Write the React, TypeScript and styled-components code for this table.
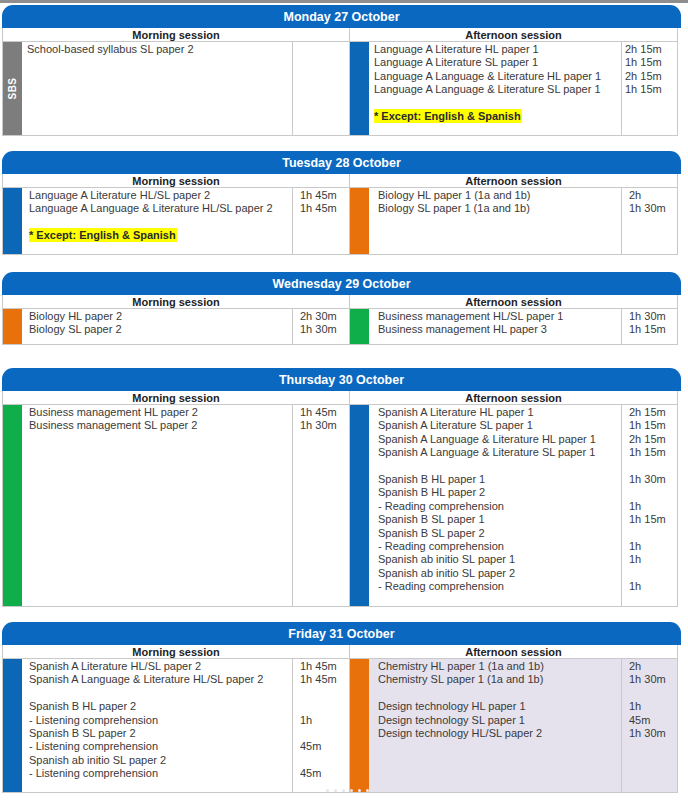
import React from "react";
import styled, { createGlobalStyle } from "styled-components";

const GlobalStyle = createGlobalStyle`
  html, body { margin: 0; padding: 0; background: #ffffff; }
  * { box-sizing: border-box; }
`;

type BarColor = "blue" | "orange" | "green" | "gray";
type Line = { t?: string; d?: string; hl?: boolean };
type Cell = { bar: BarColor; label?: string; lines: Line[]; tint?: boolean };
type DayData = { title: string; gap: number; h: number; compact?: boolean; am: Cell; pm: Cell };

const BAR: Record<BarColor, string> = {
  blue: "#0d67b7",
  orange: "#e8710c",
  green: "#10ad4b",
  gray: "#7d7d7d",
};

const BORDER = "#c9c9c9";

const Page = styled.div`
  position: relative;
  width: 688px;
  height: 800px;
  overflow: hidden;
  font-family: "Liberation Sans", Arial, sans-serif;
`;

const TopRule = styled.div`
  height: 3px;
  background: #8e8e8e;
  margin-bottom: 2px;
`;

const DayBlock = styled.section<{ $gap: number }>`
  margin: ${(p) => p.$gap}px 0 0 2px;
  width: 679px;
`;

const DayHeader = styled.div`
  height: 23px;
  padding-top: 1px;
  background: #0a68c1;
  border-radius: 11px 11px 0 0;
  color: #ffffff;
  font-weight: 700;
  font-size: 12.5px;
  display: flex;
  align-items: center;
  justify-content: center;
`;

const Table = styled.div<{ $h: number }>`
  width: 676px;
  display: grid;
  grid-template-columns: 19px 271px 57px 19px 253px 55px;
  grid-template-rows: 14px ${(p) => p.$h}px;
  border: 1px solid ${BORDER};
  border-top: none;
  background: #ffffff;
`;

const SessionHead = styled.div<{ $divider?: boolean }>`
  grid-column: span 3;
  height: 14px;
  padding-top: 1px;
  line-height: 13px;
  font-size: 11px;
  font-weight: 700;
  text-align: center;
  color: #232323;
  border-bottom: 1px solid ${BORDER};
  border-right: ${(p) => (p.$divider ? `1px solid ${BORDER}` : "none")};
`;

const Bar = styled.div<{ $color: BarColor }>`
  background: ${(p) => BAR[p.$color]};
  display: flex;
  align-items: center;
  justify-content: center;
`;

const BarLabel = styled.span`
  color: #ffffff;
  font-weight: 700;
  font-size: 10px;
  letter-spacing: 0.5px;
  transform: rotate(-90deg);
  white-space: nowrap;
`;

const SubjectCell = styled.div<{ $pad: number; $tint?: boolean }>`
  padding: 1px 0 0 ${(p) => p.$pad}px;
  border-right: 1px solid ${BORDER};
  background: ${(p) => (p.$tint ? "#e5e2ee" : "#ffffff")};
  font-size: 11px;
  line-height: 13.4px;
  color: #3a3a3a;
`;

const TimeCell = styled.div<{ $pad: number; $tint?: boolean; $divider?: boolean }>`
  padding: 1px 0 0 ${(p) => p.$pad}px;
  border-right: ${(p) => (p.$divider ? `1px solid ${BORDER}` : "none")};
  background: ${(p) => (p.$tint ? "#e5e2ee" : "#ffffff")};
  font-size: 11px;
  line-height: 13.4px;
  color: #3a3a3a;
`;

const Row = styled.div`
  height: 13.4px;
  white-space: nowrap;
`;

const Highlight = styled.span`
  background: #ffff00;
  font-weight: 700;
  color: #2a2a2a;
  padding: 1px 1px 1px 0;
`;

const Dots = styled.div`
  position: absolute;
  left: 326px;
  top: 789px;
  display: flex;
  gap: 5px;
`;

const Dot = styled.span<{ $strong?: boolean }>`
  width: 3px;
  height: 3px;
  border-radius: 50%;
  background: ${(p) => (p.$strong ? "rgba(240,240,245,0.95)" : "rgba(215,215,222,0.6)")};
`;

const days: DayData[] = [
  {
    title: "Monday 27 October",
    gap: 0,
    h: 93,
    compact: true,
    am: { bar: "gray", label: "SBS", lines: [{ t: "School-based syllabus SL paper 2" }] },
    pm: {
      bar: "blue",
      lines: [
        { t: "Language A Literature HL paper 1", d: "2h 15m" },
        { t: "Language A Literature SL paper 1", d: "1h 15m" },
        { t: "Language A Language & Literature HL paper 1", d: "2h 15m" },
        { t: "Language A Language & Literature SL paper 1", d: "1h 15m" },
        {},
        { t: "* Except: English & Spanish", hl: true },
      ],
    },
  },
  {
    title: "Tuesday 28 October",
    gap: 15,
    h: 66,
    am: {
      bar: "blue",
      lines: [
        { t: "Language A Literature HL/SL paper 2", d: "1h 45m" },
        { t: "Language A Language & Literature HL/SL paper 2", d: "1h 45m" },
        {},
        { t: "* Except: English & Spanish", hl: true },
      ],
    },
    pm: {
      bar: "orange",
      lines: [
        { t: "Biology HL paper 1 (1a and 1b)", d: "2h" },
        { t: "Biology SL paper 1 (1a and 1b)", d: "1h 30m" },
      ],
    },
  },
  {
    title: "Wednesday 29 October",
    gap: 17,
    h: 35,
    am: {
      bar: "orange",
      lines: [
        { t: "Biology HL paper 2", d: "2h 30m" },
        { t: "Biology SL paper 2", d: "1h 30m" },
      ],
    },
    pm: {
      bar: "green",
      lines: [
        { t: "Business management HL/SL paper 1", d: "1h 30m" },
        { t: "Business management HL paper 3", d: "1h 15m" },
      ],
    },
  },
  {
    title: "Thursday 30 October",
    gap: 23,
    h: 201,
    am: {
      bar: "green",
      lines: [
        { t: "Business management HL paper 2", d: "1h 45m" },
        { t: "Business management SL paper 2", d: "1h 30m" },
      ],
    },
    pm: {
      bar: "blue",
      lines: [
        { t: "Spanish A Literature HL paper 1", d: "2h 15m" },
        { t: "Spanish A Literature SL paper 1", d: "1h 15m" },
        { t: "Spanish A Language & Literature HL paper 1", d: "2h 15m" },
        { t: "Spanish A Language & Literature SL paper 1", d: "1h 15m" },
        {},
        { t: "Spanish B HL paper 1", d: "1h 30m" },
        { t: "Spanish B HL paper 2" },
        { t: "- Reading comprehension", d: "1h" },
        { t: "Spanish B SL paper 1", d: "1h 15m" },
        { t: "Spanish B SL paper 2" },
        { t: "- Reading comprehension", d: "1h" },
        { t: "Spanish ab initio SL paper 1", d: "1h" },
        { t: "Spanish ab initio SL paper 2" },
        { t: "- Reading comprehension", d: "1h" },
      ],
    },
  },
  {
    title: "Friday 31 October",
    gap: 15,
    h: 133,
    am: {
      bar: "blue",
      lines: [
        { t: "Spanish A Literature HL/SL paper 2", d: "1h 45m" },
        { t: "Spanish A Language & Literature HL/SL paper 2", d: "1h 45m" },
        {},
        { t: "Spanish B HL paper 2" },
        { t: "- Listening comprehension", d: "1h" },
        { t: "Spanish B SL paper 2" },
        { t: "- Listening comprehension", d: "45m" },
        { t: "Spanish ab initio SL paper 2" },
        { t: "- Listening comprehension", d: "45m" },
      ],
    },
    pm: {
      bar: "orange",
      tint: true,
      lines: [
        { t: "Chemistry HL paper 1 (1a and 1b)", d: "2h" },
        { t: "Chemistry SL paper 1 (1a and 1b)", d: "1h 30m" },
        {},
        { t: "Design technology HL paper 1", d: "1h" },
        { t: "Design technology SL paper 1", d: "45m" },
        { t: "Design technology HL/SL paper 2", d: "1h 30m" },
      ],
    },
  },
];

function Session({
  cell,
  subjPad,
  timePad,
  divider,
}: {
  cell: Cell;
  subjPad: number;
  timePad: number;
  divider?: boolean;
}) {
  return (
    <>
      <Bar $color={cell.bar}>{cell.label && <BarLabel>{cell.label}</BarLabel>}</Bar>
      <SubjectCell $pad={subjPad} $tint={cell.tint}>
        {cell.lines.map((l, i) => (
          <Row key={i}>{l.hl ? <Highlight>{l.t}</Highlight> : l.t ?? "\u00a0"}</Row>
        ))}
      </SubjectCell>
      <TimeCell $pad={timePad} $tint={cell.tint} $divider={divider}>
        {cell.lines.map((l, i) => (
          <Row key={i}>{l.d ?? "\u00a0"}</Row>
        ))}
      </TimeCell>
    </>
  );
}

export default function App() {
  return (
    <Page>
      <GlobalStyle />
      <TopRule />
      {days.map((d) => (
        <DayBlock key={d.title} $gap={d.gap}>
          <DayHeader>{d.title}</DayHeader>
          <Table $h={d.h}>
            <SessionHead $divider>Morning session</SessionHead>
            <SessionHead>Afternoon session</SessionHead>
            <Session cell={d.am} subjPad={d.compact ? 5 : 7} timePad={7} divider />
            <Session cell={d.pm} subjPad={d.compact ? 5 : 9} timePad={d.compact ? 3 : 7} />
          </Table>
        </DayBlock>
      ))}
      <Dots>
        <Dot />
        <Dot />
        <Dot />
        <Dot $strong />
        <Dot $strong />
        <Dot $strong />
      </Dots>
    </Page>
  );
}
